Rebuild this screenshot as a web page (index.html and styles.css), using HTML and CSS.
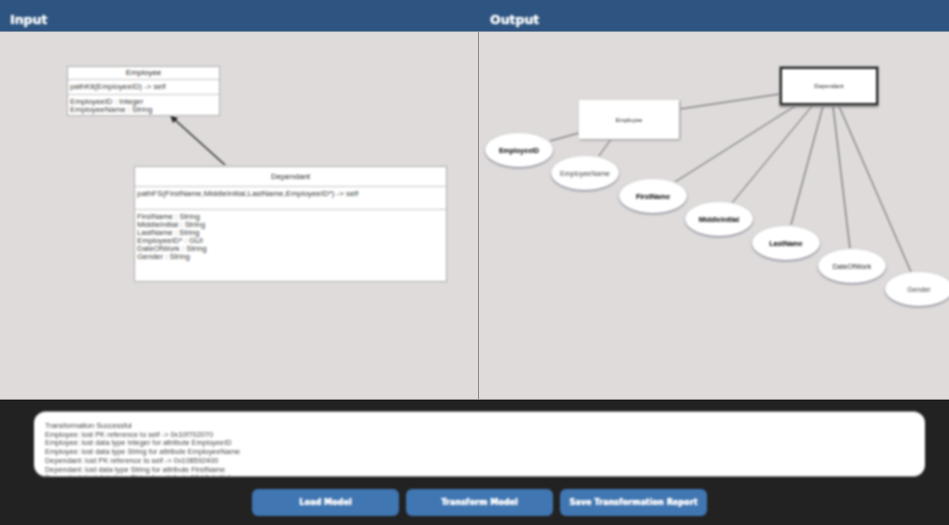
FILE: index.html
```html
<!DOCTYPE html>
<html lang="en">

<head>
    <meta charset="UTF-8">
    <meta name="viewport" content="width=device-width, initial-scale=1.0">
    <title>Model Transformation</title>

    <link rel="stylesheet" href="styles.css">
</head>

<body>
    <div class="app">
        <header class="titles">
            <h1>Input</h1>
            <h1>Output</h1>
        </header>

        <main class="panels">
            <section class="panel panel-input">
                <svg class="wires" width="478" height="367">
                    <line class="arrow" x1="225" y1="133" x2="174" y2="87"></line>
                    <polygon class="arrow-head" points="170,83 178,86 173,91"></polygon>
                </svg>

                <div class="uml uml-employee">
                    <div class="uml-name">Employee</div>
                    <div class="uml-ops">pathKit(EmployeeID) -&gt; self</div>
                    <div class="uml-attrs">
                        EmployeeID : Integer<br>
                        EmployeeName : String
                    </div>
                </div>

                <div class="uml uml-dependant">
                    <div class="uml-name">Dependant</div>
                    <div class="uml-ops">pathFS(FirstName,MiddleInitial,LastName,EmployeeID*) -&gt; self</div>
                    <div class="uml-attrs">
                        FirstName : String<br>
                        MiddleInitial : String<br>
                        LastName : String<br>
                        EmployeeID* : GUI<br>
                        DateOfWork : String<br>
                        Gender : String
                    </div>
                </div>
            </section>

            <section class="panel panel-output">
                <svg class="wires" width="470" height="367">
                    <line x1="201" y1="77" x2="301" y2="62"></line>
                    <line x1="100" y1="101" x2="71" y2="109"></line>
                    <line x1="132" y1="107" x2="120" y2="124"></line>
                    <line x1="316" y1="74" x2="196" y2="150"></line>
                    <line x1="333" y1="74" x2="253" y2="171"></line>
                    <line x1="344" y1="74" x2="312" y2="193"></line>
                    <line x1="354" y1="74" x2="371" y2="217"></line>
                    <line x1="360" y1="74" x2="432" y2="240"></line>
                </svg>

                <div class="entity entity-dependant">Dependant</div>
                <div class="entity entity-employee">Employee</div>

                <div class="attr attr-1 attr-key">EmployeeID</div>
                <div class="attr attr-2">EmployeeName</div>
                <div class="attr attr-3 attr-key">FirstName</div>
                <div class="attr attr-4 attr-key">MiddleInitial</div>
                <div class="attr attr-5 attr-key">LastName</div>
                <div class="attr attr-6 attr-mid">DateOfWork</div>
                <div class="attr attr-7">Gender</div>
            </section>
        </main>

        <footer class="bottom">
            <div class="console">
                Transformation Successful<br>
                Employee: lost PK reference to self -&gt; 0x10f702070<br>
                Employee: lost data type Integer for attribute EmployeeID<br>
                Employee: lost data type String for attribute EmployeeName<br>
                Dependant: lost PK reference to self -&gt; 0x108592400<br>
                Dependant: lost data type String for attribute FirstName<br>
                Dependant: lost data type String for attribute MiddleInitial
            </div>
            <div class="actions">
                <button type="button" class="btn">Load Model</button>
                <button type="button" class="btn">Transform Model</button>
                <button type="button" class="btn">Save Transformation Report</button>
            </div>
        </footer>
    </div>
</body>

</html>
```

FILE: styles.css
```css
html, body {
    margin: 0;
    height: 100%;
    overflow: hidden;
    background-color: #222222;
}

.app {
    display: flex;
    flex-direction: column;
    height: 525px;
    font-family: "Liberation Sans", Arial, sans-serif;
}

/* the soft look of the picture, kept off the page edges */
.titles h1, .wires, .uml, .entity, .attr, .console, .btn {
    filter: blur(0.8px);
    will-change: filter;
}

/* top bar */
.titles {
    display: grid;
    grid-template-columns: 479px 1fr;
    height: 32px;
    box-sizing: border-box;
    background-color: #2e5581;
    border-bottom: 1px solid #7f8fa2;
}

.titles h1 {
    margin: 0;
    padding: 12px 0 0 10px;
    font-family: "DejaVu Sans", sans-serif;
    font-size: 12.5px;
    line-height: 16px;
    font-weight: bold;
    color: #ffffff;
    text-shadow: 0 0 1px #ffffff;
}

.titles h1 + h1 {
    padding-left: 11px;
}

/* panels */
.panels {
    display: grid;
    grid-template-columns: 479px 1fr;
    height: 367px;
    background-color: #dedbda;
    border-bottom: 1px solid #8d8b8a;
}

.panel {
    position: relative;
    overflow: hidden;
}

.panel-input {
    border-right: 1px solid #8a8b8d;
}

.wires {
    position: absolute;
    left: 0;
    top: 0;
}

.wires line {
    stroke: #4f4f52;
    stroke-width: 0.9;
}

.wires .arrow {
    stroke: #222222;
    stroke-width: 1.3;
}

.arrow-head {
    fill: #222222;
}

/* uml boxes on the input canvas */
.uml {
    position: absolute;
    box-sizing: border-box;
    display: flex;
    flex-direction: column;
    background-color: #ffffff;
    border: 1px solid #b0b0b0;
    font-size: 7.8px;
    line-height: 8px;
    color: #404040;
}

.uml-employee {
    left: 67px;
    top: 34px;
    width: 153px;
    height: 50px;
}

.uml-dependant {
    left: 134px;
    top: 134px;
    width: 313px;
    height: 116px;
}

.uml-name {
    text-align: center;
    font-size: 8px;
    color: #303030;
    border-bottom: 1px solid #c8c8c8;
}

.uml-ops {
    padding: 3px 2px 0;
    border-bottom: 1px solid #c8c8c8;
}

.uml-attrs {
    padding: 3px 2px 0;
    flex: 1;
}

.uml-employee .uml-name {
    height: 13px;
    padding-top: 2px;
    box-sizing: border-box;
}

.uml-employee .uml-ops {
    height: 15px;
    box-sizing: border-box;
}

.uml-dependant .uml-name {
    height: 20px;
    padding-top: 6px;
    box-sizing: border-box;
}

.uml-dependant .uml-ops {
    height: 23px;
    box-sizing: border-box;
    font-size: 7.9px;
}

/* er diagram on the output canvas */
.entity {
    position: absolute;
    box-sizing: border-box;
    display: flex;
    align-items: center;
    justify-content: center;
    background-color: #ffffff;
    font-size: 6px;
    color: #222222;
}

.entity-dependant {
    left: 301px;
    top: 35px;
    width: 98px;
    height: 38px;
    border: 2px solid #222222;
    outline: 1px solid #8a8a8a;
    box-shadow: 0 2px 2px #777777;
}

.entity-employee {
    left: 100px;
    top: 68px;
    width: 100px;
    height: 39px;
    box-shadow: 1px 1px 2px #8f8f8f;
}

.attr {
    position: absolute;
    width: 68px;
    height: 34px;
    display: flex;
    align-items: center;
    justify-content: center;
    border-radius: 50%;
    background-color: #ffffff;
    box-shadow: 0 1px 2px #6e6e80;
    font-size: 7px;
    color: #444444;
}

.attr-key {
    font-weight: bold;
    color: #000000;
}

.attr-mid {
    color: #222222;
}

.attr-1 { left: 6px; top: 101px; }
.attr-2 { left: 72px; top: 124px; }
.attr-3 { left: 140px; top: 147px; }
.attr-4 { left: 206px; top: 170px; }
.attr-5 { left: 273px; top: 194px; }
.attr-6 { left: 339px; top: 217px; }
.attr-7 { left: 406px; top: 240px; }

/* bottom bar */
.bottom {
    flex: 1;
    display: flex;
    flex-direction: column;
    align-items: center;
    padding-left: 10px;
    border-top: 1px solid #141414;
}

.console {
    width: 891px;
    height: 66px;
    margin-top: 10px;
    padding: 10px 11px 0;
    box-sizing: border-box;
    overflow: hidden;
    background-color: #ffffff;
    border-top: 1px solid #8a8a8a;
    border-bottom: 1px solid #8a8a8a;
    border-radius: 12px;
    font-size: 7.35px;
    line-height: 8.7px;
    color: #444444;
}

.actions {
    display: flex;
    gap: 7px;
    margin-top: 12px;
}

.btn {
    width: 147px;
    height: 27px;
    padding: 0;
    border: none;
    border-radius: 6px;
    background-color: #4076b1;
    font-family: "DejaVu Sans", sans-serif;
    font-size: 8px;
    font-weight: bold;
    letter-spacing: 0.05px;
    color: #ffffff;
    text-shadow: 0 0 1px #ffffff;
}
```
